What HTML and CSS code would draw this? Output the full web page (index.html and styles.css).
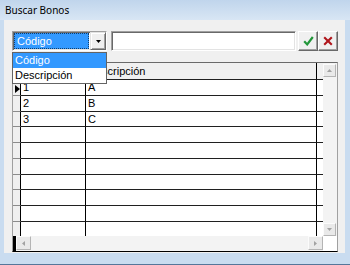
FILE: index.html
```html
<!DOCTYPE html>
<html lang="es">

<head>
    <meta charset="UTF-8" />
    <title>Buscar Bonos</title>
    <link rel="stylesheet" href="styles.css">
</head>

<body>
    <div class="window">
        <div class="titlebar">Buscar Bonos</div>

        <div class="client">
            <div class="toolbar">
                <div class="combo">
                    <div class="combo-value"><span class="sel">Código</span></div>
                    <div class="combo-btn">
                        <svg width="5" height="3" viewBox="0 0 5 3"><polygon points="0,0 5,0 2.5,3" fill="#000" /></svg>
                    </div>
                </div>
                <div class="search"></div>
                <button class="tool">
                    <svg width="11" height="10" viewBox="0 0 11 10"><path d="M1.2 5.2 L4.2 8.4 L9.8 1" fill="none" stroke="#22963a" stroke-width="2.2" /></svg>
                </button>
                <button class="tool">
                    <svg width="10" height="10" viewBox="0 0 10 10"><path d="M1.2 1.2 L8.8 8.8 M8.8 1.2 L1.2 8.8" fill="none" stroke="#b0161c" stroke-width="2.1" /></svg>
                </button>
            </div>

            <div class="grid">
                <div class="grid-top">
                    <div class="grid-body">
                        <!-- first header cell sits under the open list -->
                        <div class="row header">
                            <div class="cell ind"></div>
                            <div class="cell c1"></div>
                            <div class="cell c2">Descripción</div>
                            <div class="cell fill"></div>
                        </div>
                        <div class="row">
                            <div class="cell ind">
                                <svg width="5" height="8" viewBox="0 0 5 8"><polygon points="0,0 5,4 0,8" fill="#000" /></svg>
                            </div>
                            <div class="cell c1">1</div>
                            <div class="cell c2">A</div>
                            <div class="cell fill"></div>
                        </div>
                        <div class="row">
                            <div class="cell ind"></div>
                            <div class="cell c1">2</div>
                            <div class="cell c2">B</div>
                            <div class="cell fill"></div>
                        </div>
                        <div class="row">
                            <div class="cell ind"></div>
                            <div class="cell c1">3</div>
                            <div class="cell c2">C</div>
                            <div class="cell fill"></div>
                        </div>
                        <div class="row"><div class="cell ind"></div><div class="cell c1"></div><div class="cell c2"></div><div class="cell fill"></div></div>
                        <div class="row"><div class="cell ind"></div><div class="cell c1"></div><div class="cell c2"></div><div class="cell fill"></div></div>
                        <div class="row"><div class="cell ind"></div><div class="cell c1"></div><div class="cell c2"></div><div class="cell fill"></div></div>
                        <div class="row"><div class="cell ind"></div><div class="cell c1"></div><div class="cell c2"></div><div class="cell fill"></div></div>
                        <div class="row"><div class="cell ind"></div><div class="cell c1"></div><div class="cell c2"></div><div class="cell fill"></div></div>
                        <div class="row"><div class="cell ind"></div><div class="cell c1"></div><div class="cell c2"></div><div class="cell fill"></div></div>
                        <div class="row"><div class="cell ind"></div><div class="cell c1"></div><div class="cell c2"></div><div class="cell fill"></div></div>
                    </div>
                    <div class="vscroll">
                        <div class="sbtn">
                            <svg width="5" height="3" viewBox="0 0 5 3"><polygon points="0,3 5,3 2.5,0" fill="#a2a2a2" /></svg>
                        </div>
                        <div class="sbtn">
                            <svg width="5" height="3" viewBox="0 0 5 3"><polygon points="0,0 5,0 2.5,3" fill="#a2a2a2" /></svg>
                        </div>
                    </div>
                </div>
                <div class="grid-bottom">
                    <div class="hscroll">
                        <div class="hblock"></div>
                        <div class="sbtn wide">
                            <svg width="3" height="5" viewBox="0 0 3 5"><polygon points="3,0 3,5 0,2.5" fill="#a2a2a2" /></svg>
                        </div>
                        <div class="track"></div>
                        <div class="sbtn wide">
                            <svg width="3" height="5" viewBox="0 0 3 5"><polygon points="0,0 0,5 3,2.5" fill="#a2a2a2" /></svg>
                        </div>
                    </div>
                    <div class="corner"></div>
                </div>
            </div>

            <!-- open list of the combo, drawn over the grid -->
            <ul class="dropdown">
                <li class="active">Código</li>
                <li>Descripción</li>
            </ul>
        </div>
    </div>
</body>

</html>
```

FILE: styles.css
```css
body {
    margin: 0;
    font-family: 'Liberation Sans', Arial, sans-serif;
    font-size: 11px;
    color: #000;
}

.window {
    width: 350px;
    height: 265px;
    box-sizing: border-box;
    background: #c9dcf0;
    border-bottom: 1px solid #55769a;
    overflow: hidden;
}

.titlebar {
    height: 20px;
    padding-left: 5px;
    line-height: 20px;
    font-family: 'Noto Sans', sans-serif;
    font-size: 10px;
    background: linear-gradient(#c0d5ec, #d8e6f4);
}

.client {
    position: relative;
    width: 341px;
    height: 233px;
    margin-left: 4px;
    box-sizing: border-box;
    padding: 11px 0 0 8px;
    background: #f0f0f0;
}

.toolbar {
    display: flex;
    height: 20px;
}

/* sunken 3d edge shared by the combo and the text box */
.combo,
.search {
    height: 20px;
    box-sizing: border-box;
    border: 1px solid;
    border-color: #a0a0a0 #fff #fff #a0a0a0;
    box-shadow: inset 1px 1px #696969, inset -1px -1px #e3e3e3;
    background: #fff;
}

.combo {
    display: flex;
    width: 95px;
}

.combo-value {
    width: 75px;
    height: 16px;
    margin: 1px;
}

.sel {
    display: block;
    height: 100%;
    box-sizing: border-box;
    padding-left: 2px;
    line-height: 14px;
    background: #3399ff;
    color: #fff;
    border: 1px dotted #123f6c;
}

.combo-btn {
    display: grid;
    place-items: center;
    width: 16px;
    height: 18px;
    margin-left: auto;
    box-sizing: border-box;
    background: #f0f0f0;
    border: 1px solid;
    border-color: #e3e3e3 #696969 #696969 #e3e3e3;
    box-shadow: inset 1px 1px #fff, inset -1px -1px #a0a0a0;
}

.search {
    width: 185px;
    margin: 0 2px 0 4px;
}

.tool {
    display: grid;
    place-items: center;
    width: 20px;
    height: 20px;
    padding: 0;
    box-sizing: border-box;
    background: #f0f0f0;
    border: 1px solid;
    border-color: #fff #696969 #696969 #fff;
    box-shadow: inset -1px -1px #a0a0a0;
}

.grid {
    width: 326px;
    height: 190px;
    margin-top: 11px;
    box-sizing: border-box;
    border: 1px solid #6a6a6a;
    border-left-color: #a0a0a0;
    border-right-color: #a0a0a0;
    border-bottom-color: #000;
    background: #fff;
}

.grid-top {
    display: flex;
    height: 173px;
}

.grid-body {
    width: 310px;
    overflow: hidden;
}

.row {
    display: flex;
    height: 15.75px;
}

.cell {
    box-sizing: border-box;
    padding: 1px 0 0 2px;
    line-height: 13px;
    border-bottom: 1px solid #202020;
    border-right: 1px solid #000;
    white-space: nowrap;
    overflow: hidden;
}

.ind {
    width: 8px;
    padding: 3px 0 0 2px;
    background: #f0f0f0;
    border-bottom-color: #8c8c8c;
}

.c1 {
    width: 65px;
}

.c2 {
    width: 231px;
}

.fill {
    width: 6px;
    border-right: 0;
}

.header {
    height: 17px;
}

.header .cell {
    padding-top: 2px;
    background: #f0f0f0;
}

.vscroll {
    display: flex;
    flex-direction: column;
    justify-content: space-between;
    width: 14px;
    background: #f3f3f3;
}

.sbtn {
    display: grid;
    place-items: center;
    width: 13px;
    height: 13px;
    box-sizing: border-box;
    background: #e9e9e9;
    border: 1px solid;
    border-color: #fbfbfb #b4b4b4 #b4b4b4 #fbfbfb;
}

.vscroll .sbtn:first-child {
    margin-top: 1px;
}

.grid-bottom {
    display: flex;
    height: 15px;
}

.hscroll {
    display: flex;
    width: 310px;
    background: #f3f3f3;
}

.hscroll .sbtn {
    width: 15px;
    height: 14px;
}

.hblock {
    width: 3px;
    background: #000;
}

.track {
    flex: 1;
}

.corner {
    flex: 1;
    background: #fff;
}

.dropdown {
    position: absolute;
    left: 8px;
    top: 32px;
    width: 95px;
    margin: 0;
    padding: 0;
    list-style: none;
    box-sizing: border-box;
    border: 1px solid #646464;
    background: #fff;
}

.dropdown li {
    height: 15px;
    padding-left: 2px;
    line-height: 15px;
}

.dropdown .active {
    background: #3399ff;
    color: #fff;
}
```
